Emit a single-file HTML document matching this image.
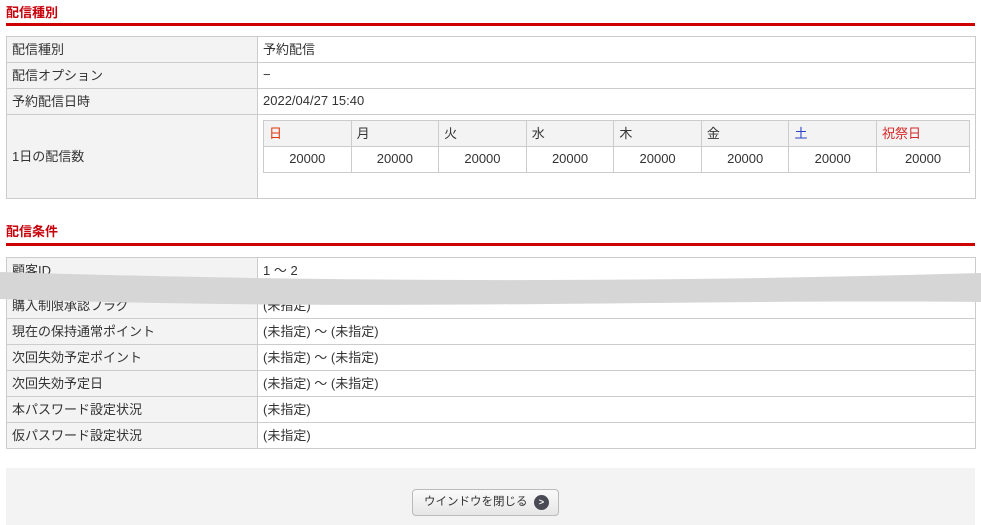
<!DOCTYPE html>
<html><head><meta charset="utf-8"><style>
body{margin:0;width:981px;height:525px;overflow:hidden;background:#fff;font-family:"Liberation Sans","Noto Sans CJK JP",sans-serif;font-size:13px;color:#333;position:relative}
.h{position:absolute;left:6px;color:#c8000a;font-weight:bold;font-size:13px}
.line{position:absolute;left:6px;width:969px;height:3px;background:#cc0000}
table{border-collapse:collapse;position:absolute;left:6px;width:970px}
td{border:1px solid #ccc;padding:0 5px 2px 5px;height:23px;vertical-align:middle}
td.l{background:#f2f3f2;width:240px}
.in{position:static;width:100%;margin:0}
.in td{height:23px;padding:0 5px 2px 5px}
.in tr:first-child td{background:#f2f3f2}
.in tr:nth-child(2) td{text-align:center}
.foot{position:absolute;left:6px;top:468px;width:969px;height:57px;background:#f3f3f3}
.btn{position:absolute;left:412px;top:489px;width:147px;height:27px;border:1px solid #bbb;border-radius:4px;background:linear-gradient(#fafafa,#e6e6e6);box-sizing:border-box;font-size:11.5px;line-height:25px;color:#333;padding-left:11px}
.btn i{position:absolute;left:121px;top:5px;width:15px;height:15px;border-radius:50%;background:#4a4a55;color:#fff;font-style:normal;font-size:9px;line-height:15px;text-align:center;font-weight:bold}
</style></head><body>
<div class="h" style="top:2px">配信種別</div>
<div class="line" style="top:23px"></div>
<table style="top:36px">
<tr><td class="l">配信種別</td><td>予約配信</td></tr>
<tr><td class="l">配信オプション</td><td>−</td></tr>
<tr><td class="l">予約配信日時</td><td>2022/04/27 15:40</td></tr>
<tr><td class="l" style="height:81px">1日の配信数</td><td style="vertical-align:top;padding:5px 5px 0 5px">
<table class="in">
<tr><td style="color:#e0340a">日</td><td>月</td><td>火</td><td>水</td><td>木</td><td>金</td><td style="color:#2c40c8">土</td><td style="color:#d42a2a">祝祭日</td></tr>
<tr><td>20000</td><td>20000</td><td>20000</td><td>20000</td><td>20000</td><td>20000</td><td>20000</td><td>20000</td></tr>
</table></td></tr>
</table>
<div class="h" style="top:221px">配信条件</div>
<div class="line" style="top:243px"></div>
<table style="top:257px">
<tr><td class="l">顧客ID</td><td>1 ～ 2</td></tr>
<tr><td class="l" style="height:8px;padding:0"></td><td style="height:8px;padding:0"></td></tr>
<tr><td class="l">購入制限承認フラグ</td><td>(未指定)</td></tr>
<tr><td class="l">現在の保持通常ポイント</td><td>(未指定) ～ (未指定)</td></tr>
<tr><td class="l">次回失効予定ポイント</td><td>(未指定) ～ (未指定)</td></tr>
<tr><td class="l">次回失効予定日</td><td>(未指定) ～ (未指定)</td></tr>
<tr><td class="l">本パスワード設定状況</td><td>(未指定)</td></tr>
<tr><td class="l">仮パスワード設定状況</td><td>(未指定)</td></tr>
</table>
<svg style="position:absolute;left:0;top:0" width="981" height="525"><path d="M0,272 C300,281 600,284 981,273 L981,302 C650,299 400,312 0,299 Z" fill="#d6d6d6"/></svg>
<div class="foot"></div>
<div class="btn">ウインドウを閉じる<i>&gt;</i></div>
</body></html>
